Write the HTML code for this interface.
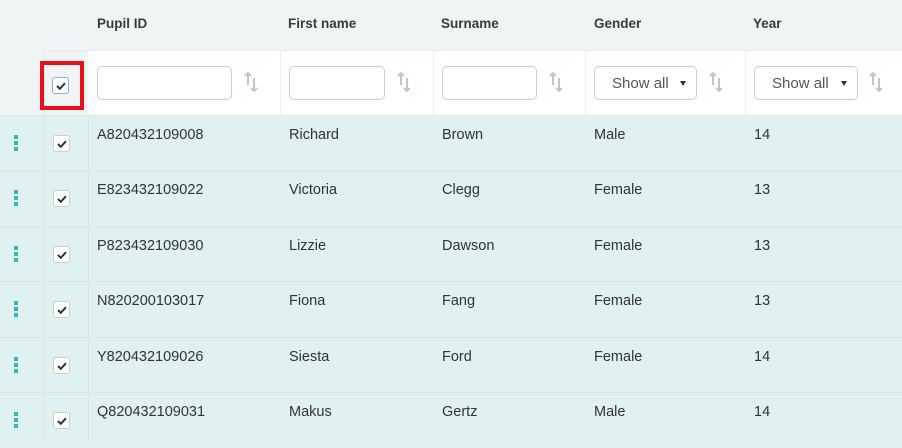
<!DOCTYPE html><html><head><style>
*{margin:0;padding:0;box-sizing:border-box}
body{width:902px;height:443px;overflow:hidden;background:#dff1f1;font-family:"Liberation Sans",sans-serif;font-size:14.5px;color:#333;position:relative}
.a{position:absolute}
.hdr{left:0;top:0;width:902px;height:115px;background:#f1f4f5}
.flt{left:88px;top:50px;width:814px;height:65px;background:#fff;border-top:1px solid #e8ecee}
.fl2{left:44px;top:50px;width:44px;height:65px;background:#f1f4f5;border-top:1px solid #e8ecee;border-left:1px solid #e6eaeb}
.ht{top:16px;font-weight:bold;font-size:13.5px;color:#3a3a3a}
.inp{top:66px;height:34px;border:1px solid #ccc;border-radius:5px;background:#fff}
.sel{top:66px;height:34px;border:1px solid #ccc;border-radius:5px;background:#fff;font-size:15px;color:#555;padding:8px 0 0 17px}
.sel:after{content:"";position:absolute;right:10px;top:14px;border-left:3.5px solid transparent;border-right:3.5px solid transparent;border-top:5px solid #333}
.srt{top:71px;width:16px;height:22px}
.vl{top:50px;width:1px;height:65px;background:#eceff0}
.row{left:0;width:902px;height:56px;border-top:1px solid #d8ebeb}
.cb{width:17px;height:17px;border:1px solid #ccc;border-radius:3px;background:#fff;overflow:visible}
.cb svg{position:absolute;left:3px;top:4px}
.dots{width:4px;left:14px}
.dots i{display:block;width:4px;height:4px;background:#3bb8b0;margin-bottom:2px}
.t{font-size:14.5px;color:#333}
</style></head><body>
<div class="a hdr"></div>
<div class="a fl2"></div>
<div class="a flt"></div>
<div class="a ht" style="left:97px">Pupil ID</div>
<div class="a ht" style="left:288px">First name</div>
<div class="a ht" style="left:441px">Surname</div>
<div class="a ht" style="left:594px">Gender</div>
<div class="a ht" style="left:753px">Year</div>
<div class="a vl" style="left:280px"></div><div class="a vl" style="left:433px"></div><div class="a vl" style="left:585px"></div><div class="a vl" style="left:745px"></div>
<div class="a inp" style="left:97px;width:135px"></div>
<div class="a inp" style="left:289px;width:96px"></div>
<div class="a inp" style="left:442px;width:95px"></div>
<div class="a sel" style="left:594px;width:103px">Show all</div>
<div class="a sel" style="left:754px;width:104px">Show all</div>
<div id="srt"></div>
<div class="a" style="left:40px;top:61px;width:44px;height:49px;border:4px solid #e8101a"></div>
<div class="a cb" style="left:52px;top:77px;border-color:#8aaee8"><svg width="10" height="8" viewBox="0 0 10 8"><path d="M1 4l2.8 2.8L9 1.2" fill="none" stroke="#333" stroke-width="2"/></svg></div>
<div class="a" style="left:44px;top:115px;width:1px;height:328px;background:#d6e9e9"></div>
<div class="a" style="left:88px;top:115px;width:1px;height:328px;background:#d6e9e9"></div>
<div id="rows"></div>
<script>
var s="";[243,396,548,708,868].forEach(function(x){s+='<svg class="a srt" style="left:'+x+'px" viewBox="0 0 16 22"><g fill="none" stroke="#bccad0" stroke-width="2"><path d="M5 14V2M2 5l3-3 3 3"/><path d="M11 7v13M8 17l3 3 3-3"/></g></svg>'});
document.getElementById("srt").innerHTML=s;
var ck='<svg width="10" height="8" viewBox="0 0 10 8"><path d="M1 4l2.8 2.8L9 1.2" fill="none" stroke="#333" stroke-width="2"/></svg>';
var d=[["A820432109008","Richard","Brown","Male","14"],["E823432109022","Victoria","Clegg","Female","13"],["P823432109030","Lizzie","Dawson","Female","13"],["N820200103017","Fiona","Fang","Female","13"],["Y820432109026","Siesta","Ford","Female","14"],["Q820432109031","Makus","Gertz","Male","14"]];
var h="";d.forEach(function(r,i){var y=115+i*55.4;
h+='<div class="a row" style="top:'+y+'px"></div>';
h+='<div class="a dots" style="top:'+(y+20)+'px"><i></i><i></i><i></i></div>';
h+='<div class="a cb" style="left:53px;top:'+(y+20)+'px">'+ck+'</div>';
var xs=[97,289,442,594,754];r.forEach(function(t,j){h+='<div class="a t" style="left:'+xs[j]+'px;top:'+(y+12)+'px">'+t+'</div>'});});
document.getElementById("rows").innerHTML=h;
</script>
</body></html>
